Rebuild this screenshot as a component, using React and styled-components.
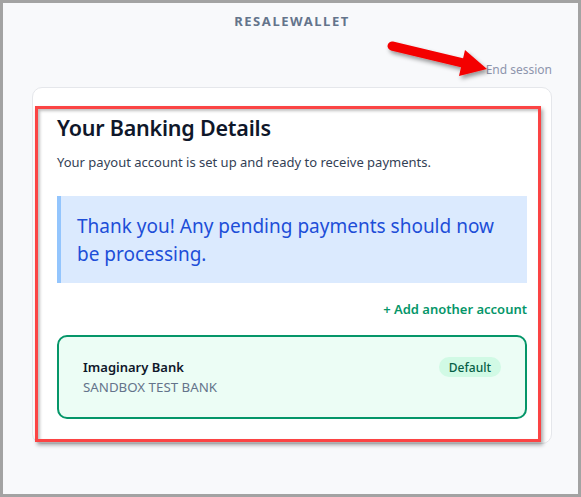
import React from 'react';
import styled, { createGlobalStyle } from 'styled-components';

const Global = createGlobalStyle`
  html, body {
    margin: 0;
    padding: 0;
  }
  body {
    font-family: "Noto Sans", "Open Sans", Arial, sans-serif;
    -webkit-font-smoothing: antialiased;
  }
`;

const Frame = styled.div`
  position: relative;
  box-sizing: border-box;
  width: 581px;
  height: 497px;
  border: 3px solid #a3a3a3;
  background: #f8f9fb;
  padding: 8px 26px 0 29px;
  overflow: hidden;
`;

const Brand = styled.div`
  text-align: center;
  font-size: 13px;
  line-height: 20px;
  font-weight: 700;
  letter-spacing: 0.12em;
  color: #64748b;
`;

const SessionRow = styled.div`
  display: flex;
  justify-content: flex-end;
  margin-top: 29px;
`;

const SessionLink = styled.a`
  font-size: 12px;
  line-height: 20px;
  color: #8e95ad;
  text-decoration: none;
  cursor: pointer;
`;

const Card = styled.section`
  position: relative;
  margin-top: 7px;
  background: #fff;
  border: 1px solid #e5e7eb;
  border-radius: 10px;
  padding: 24px;
`;

const Title = styled.h1`
  margin: 0;
  font-size: 21.5px;
  line-height: 32px;
  font-weight: 600;
  letter-spacing: -0.01em;
  color: #0f172a;
`;

const Subtitle = styled.p`
  margin: 8px 0 24px;
  font-size: 13px;
  line-height: 20px;
  color: #334155;
`;

const Notice = styled.div`
  background: #dbeafe;
  border-left: 4px solid #93c5fd;
  padding: 16px 16px 15px;
  font-size: 19px;
  line-height: 28px;
  color: #1d4ed8;
`;

const Actions = styled.div`
  display: flex;
  justify-content: flex-end;
  margin: 16px 0;
`;

const AddLink = styled.a`
  font-size: 13px;
  line-height: 20px;
  font-weight: 600;
  color: #059669;
  cursor: pointer;
`;

const Account = styled.div`
  display: flex;
  justify-content: space-between;
  align-items: flex-start;
  border: 2px solid #059669;
  border-radius: 10px;
  background: #ecfdf5;
  padding: 20px 24px;
`;

const BankName = styled.div`
  font-size: 13px;
  line-height: 20px;
  font-weight: 600;
  color: #0f172a;
`;

const BankSub = styled.div`
  font-size: 13.3px;
  line-height: 20px;
  color: #64748b;
`;

const Badge = styled.span`
  display: inline-flex;
  align-items: center;
  height: 20px;
  padding: 0 10px;
  border-radius: 999px;
  background: #d1fae5;
  color: #065f46;
  font-size: 12px;
  font-weight: 500;
`;

/* callout overlays */
const Highlight = styled.div`
  position: absolute;
  left: 2px;
  top: 18px;
  width: 506px;
  height: 336px;
  box-sizing: border-box;
  border: 3px solid #fb4444;
  box-shadow: 2px 3px 4px rgba(0, 0, 0, 0.35), inset 2px 2px 3px rgba(0, 0, 0, 0.25);
  pointer-events: none;
`;

const ArrowLayer = styled.svg`
  position: absolute;
  left: -3px;
  top: -3px;
  pointer-events: none;
`;

const Arrow = () => (
  <ArrowLayer width="581" height="100" viewBox="0 0 581 100">
    <defs>
      <filter id="arrowShadow" x="-20%" y="-50%" width="140%" height="200%">
        <feDropShadow dx="2" dy="3" stdDeviation="2" floodColor="#000" floodOpacity="0.4" />
      </filter>
    </defs>
    <g filter="url(#arrowShadow)" fill="#f40000">
      <line x1="392" y1="46" x2="463" y2="63" stroke="#f40000" strokeWidth="9" strokeLinecap="round" />
      <polygon points="465,50 487,69 459,76 462,63" />
    </g>
  </ArrowLayer>
);

export default function App() {
  return (
    <>
      <Global />
      <Frame>
        <Brand>RESALEWALLET</Brand>
        <SessionRow>
          <SessionLink>End session</SessionLink>
        </SessionRow>
        <Card>
          <Title>Your Banking Details</Title>
          <Subtitle>Your payout account is set up and ready to receive payments.</Subtitle>
          <Notice>Thank you! Any pending payments should now be processing.</Notice>
          <Actions>
            <AddLink>+ Add another account</AddLink>
          </Actions>
          <Account>
            <div>
              <BankName>Imaginary Bank</BankName>
              <BankSub>SANDBOX TEST BANK</BankSub>
            </div>
            <Badge>Default</Badge>
          </Account>
          <Highlight />
        </Card>
        <Arrow />
      </Frame>
    </>
  );
}
